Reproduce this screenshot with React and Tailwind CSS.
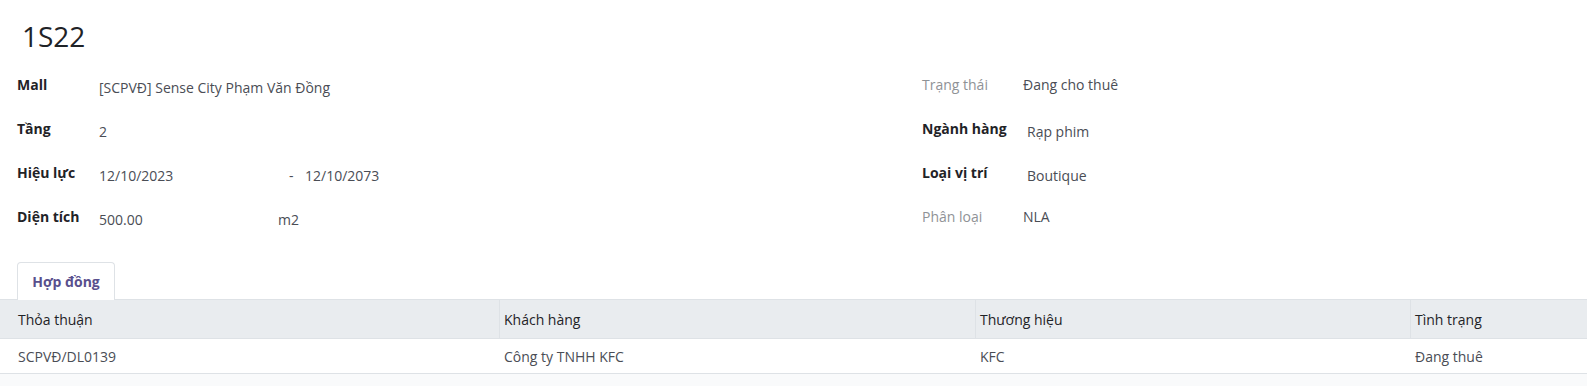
import React from "react";

const leftRows = [
  { label: "Mall", value: "[SCPVĐ] Sense City Phạm Văn Đồng" },
  { label: "Tầng", value: "2" },
];

const Label = ({ children, muted }) => (
  <div className={muted ? "font-normal text-[#8f9296]" : "font-bold text-[#1f2327]"}>
    {children}
  </div>
);

export default function App() {
  return (
    <div
      className="w-[1587px] h-[386px] overflow-hidden bg-white text-[14px] leading-[21px] text-[#4a4d55]"
      style={{ fontFamily: '"Open Sans", "Noto Sans", sans-serif' }}
    >
      <div className="pl-[22px] pt-[17px] h-[74px] text-[28px] leading-[38px] text-[#1f2327]">
        1S22
      </div>

      <div className="grid grid-cols-[922px_1fr]">
        {/* left column */}
        <div className="flex flex-col pl-[17px]">
          {leftRows.map((r) => (
            <div key={r.label} className="flex h-[44px]">
              <div className="w-[82px]">
                <Label>{r.label}</Label>
              </div>
              <div className="pt-[3px]">{r.value}</div>
            </div>
          ))}
          <div className="flex h-[44px]">
            <div className="w-[82px]">
              <Label>Hiệu lực</Label>
            </div>
            <div className="pt-[3px] w-[190px]">12/10/2023</div>
            <div className="pt-[3px] w-[16px]">-</div>
            <div className="pt-[3px]">12/10/2073</div>
          </div>
          <div className="flex h-[44px]">
            <div className="w-[82px]">
              <Label>Diện tích</Label>
            </div>
            <div className="pt-[3px] w-[179px]">500.00</div>
            <div className="pt-[3px]">m2</div>
          </div>
        </div>

        {/* right column */}
        <div className="flex flex-col">
          <div className="flex h-[44px]">
            <div className="w-[101px]">
              <Label muted>Trạng thái</Label>
            </div>
            <div>Đang cho thuê</div>
          </div>
          <div className="flex h-[44px]">
            <div className="w-[105px]">
              <Label>Ngành hàng</Label>
            </div>
            <div className="pt-[3px]">Rạp phim</div>
          </div>
          <div className="flex h-[44px]">
            <div className="w-[105px]">
              <Label>Loại vị trí</Label>
            </div>
            <div className="pt-[3px]">Boutique</div>
          </div>
          <div className="flex h-[44px]">
            <div className="w-[101px]">
              <Label muted>Phân loại</Label>
            </div>
            <div>NLA</div>
          </div>
        </div>
      </div>

      {/* tabs */}
      <div className="mt-[12px] pl-[17px] flex">
        <div className="w-[98px] h-[38px] -mb-[1px] border border-b-0 border-[#dee2e6] rounded-t-[4px] bg-white flex items-center justify-center font-bold text-[#594f8d]">
          Hợp đồng
        </div>
      </div>

      {/* table */}
      <div className="border-t border-[#dee2e6]">
        <div className="grid grid-cols-[499px_476px_435px_1fr] h-[39px] bg-[#e9ecef] text-[#1f2327] border-b border-[#dee2e6]">
          <div className="flex items-center pl-[18px]">Thỏa thuận</div>
          <div className="flex items-center pl-[4px] border-l border-[#dee2e6]">Khách hàng</div>
          <div className="flex items-center pl-[4px] border-l border-[#dee2e6]">Thương hiệu</div>
          <div className="flex items-center pl-[4px] border-l border-[#dee2e6]">Tình trạng</div>
        </div>
        <div className="grid grid-cols-[499px_476px_435px_1fr] h-[35px] border-b border-[#dee2e6]">
          <div className="flex items-center pl-[18px]">SCPVĐ/DL0139</div>
          <div className="flex items-center pl-[5px]">Công ty TNHH KFC</div>
          <div className="flex items-center pl-[5px]">KFC</div>
          <div className="flex items-center pl-[5px]">Đang thuê</div>
        </div>
        <div className="h-[40px] bg-[#f9fafb]" />
      </div>
    </div>
  );
}
